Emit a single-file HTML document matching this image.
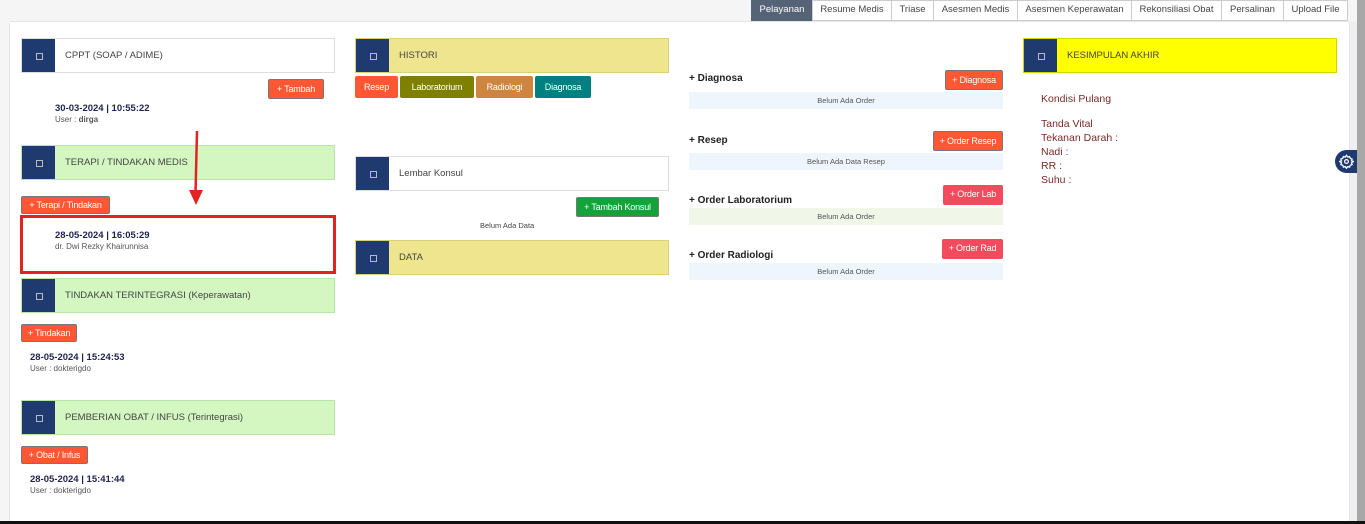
<!DOCTYPE html><html><head><style>
*{box-sizing:border-box;margin:0;padding:0}
body{width:1365px;height:524px;overflow:hidden;background:#f5f5f5;font-family:"Liberation Sans",sans-serif;position:relative;font-size:10px;color:#333}
.a{position:absolute}
.tab{position:absolute;top:0;height:21px;border:1px solid #ccc;background:#fff;color:#444;font-size:9.5px;text-align:center;line-height:18px}
.card{left:9px;top:21px;width:1341px;height:501px;background:#fff;border:1px solid #e4e4ea;border-radius:3px}
.hd{position:absolute;height:35px;border:1px solid #ddd;font-size:9.5px;color:#444;line-height:33px;padding-left:43px}
.hd i{position:absolute;left:0;top:0;width:33px;height:33px;background:#1f3a6e}
.hd i:after{content:"";position:absolute;left:14px;top:14px;width:5px;height:5px;border:1px solid #bbb}
.g{background:#d4f7c2;border-color:#b9e6a8}.y{background:#efe58e;border-color:#d8d07a}
.btn{position:absolute;height:20px;color:#fff;font-size:9px;letter-spacing:-0.2px;line-height:18px;padding:0;text-align:center;border-radius:2px;border:1px solid #777;background:#ff5733;white-space:nowrap}
.dt{position:absolute;font-size:9.5px;font-weight:bold;color:#1e2350}
.us{position:absolute;font-size:8px;color:#555}
.sec{position:absolute;left:689px;font-size:10px;font-weight:bold;color:#222}
.bar{position:absolute;left:689px;width:314px;height:17px;background:#eef5fd;font-size:7.5px;color:#555;text-align:center;line-height:17px}
.kp{position:absolute;left:1041px;font-size:10.5px;color:#7a2a2a}
</style></head><body>
<div class="tab" style="left:751px;width:62px;background:#546375;color:#fff;border-color:#546375">Pelayanan</div>
<div class="tab" style="left:812px;width:80px">Resume Medis</div>
<div class="tab" style="left:891px;width:43px">Triase</div>
<div class="tab" style="left:933px;width:85px">Asesmen Medis</div>
<div class="tab" style="left:1017px;width:115px">Asesmen Keperawatan</div>
<div class="tab" style="left:1131px;width:91px">Rekonsiliasi Obat</div>
<div class="tab" style="left:1221px;width:63px">Persalinan</div>
<div class="tab" style="left:1283px;width:65px">Upload File</div>
<div class="a card"></div>
<div class="a" style="left:1350px;top:21px;width:7px;height:501px;background:#efeff1"></div>
<div class="a" style="left:1357px;top:0;width:8px;height:524px;background:#a8a8a8"></div>
<div class="a" style="left:0;top:521px;width:1365px;height:3px;background:#111"></div>

<div class="hd" style="left:21px;top:38px;width:314px;background:#fff">CPPT (SOAP / ADIME)<i></i></div>
<div class="btn" style="left:268px;top:79px;width:56px">+ Tambah</div>
<div class="dt" style="left:55px;top:103px">30-03-2024 | 10:55:22</div>
<div class="us" style="left:55px;top:115px">User : <b>dirga</b></div>

<div class="hd g" style="left:21px;top:145px;width:314px">TERAPI / TINDAKAN MEDIS<i></i></div>
<div class="btn" style="left:21px;top:196px;width:89px;height:18px;line-height:16px">+ Terapi / Tindakan</div>
<div class="a" style="left:20px;top:215px;width:316px;height:59px;border:3px solid #e32222"></div>
<div class="dt" style="left:55px;top:230px">28-05-2024 | 16:05:29</div>
<div class="us" style="left:55px;top:242px">dr. Dwi Rezky Khairunnisa</div>
<svg class="a" style="left:188px;top:130px" width="16" height="76"><line x1="9" y1="1" x2="7.5" y2="64" stroke="#e32222" stroke-width="2.5"/><polygon points="1,60 15,60 8,75" fill="#e32222"/></svg>

<div class="hd g" style="left:21px;top:278px;width:314px">TINDAKAN TERINTEGRASI (Keperawatan)<i></i></div>
<div class="btn" style="left:21px;top:324px;width:56px;height:18px;line-height:16px">+ Tindakan</div>
<div class="dt" style="left:30px;top:352px">28-05-2024 | 15:24:53</div>
<div class="us" style="left:30px;top:364px">User : dokterigdo</div>

<div class="hd g" style="left:21px;top:400px;width:314px">PEMBERIAN OBAT / INFUS (Terintegrasi)<i></i></div>
<div class="btn" style="left:21px;top:446px;width:67px;height:18px;line-height:16px">+ Obat / Infus</div>
<div class="dt" style="left:30px;top:474px">28-05-2024 | 15:41:44</div>
<div class="us" style="left:30px;top:486px">User : dokterigdo</div>

<div class="hd y" style="left:355px;top:38px;width:314px">HISTORI<i></i></div>
<div class="btn" style="left:355px;top:76px;height:22px;line-height:22px;border:none;background:#ff5733;width:43px">Resep</div>
<div class="btn" style="left:400px;top:76px;height:22px;line-height:22px;border:none;background:#808000;width:74px">Laboratorium</div>
<div class="btn" style="left:476px;top:76px;height:22px;line-height:22px;border:none;background:#cd853f;width:57px">Radiologi</div>
<div class="btn" style="left:535px;top:76px;height:22px;line-height:22px;border:none;background:#008080;width:56px">Diagnosa</div>
<div class="hd" style="left:355px;top:156px;width:314px;background:#fff">Lembar Konsul<i></i></div>
<div class="btn" style="left:576px;top:197px;width:83px;background:#14a33a">+ Tambah Konsul</div>
<div class="a" style="left:480px;top:221px;font-size:7.5px;color:#444">Belum Ada Data</div>
<div class="hd y" style="left:355px;top:240px;width:314px">DATA<i></i></div>

<div class="sec" style="top:73px">+ Diagnosa</div>
<div class="btn" style="left:945px;width:58px;top:70px">+ Diagnosa</div>
<div class="bar" style="top:92px">Belum Ada Order</div>
<div class="sec" style="top:135px">+ Resep</div>
<div class="btn" style="left:933px;width:70px;top:131px">+ Order Resep</div>
<div class="bar" style="top:153px">Belum Ada Data Resep</div>
<div class="sec" style="top:195px">+ Order Laboratorium</div>
<div class="btn" style="left:943px;width:60px;top:185px;border:none;background:#f24b5e">+ Order Lab</div>
<div class="bar" style="top:208px;background:#f0f6e8">Belum Ada Order</div>
<div class="sec" style="top:250px">+ Order Radiologi</div>
<div class="btn" style="left:942px;width:61px;top:239px;border:none;background:#f24b5e">+ Order Rad</div>
<div class="bar" style="top:263px">Belum Ada Order</div>

<div class="hd" style="left:1023px;top:38px;width:314px;background:#ff0;border-color:#d8d800">KESIMPULAN AKHIR<i></i></div>
<div class="kp" style="top:93px">Kondisi Pulang</div>
<div class="kp" style="top:118px">Tanda Vital</div>
<div class="kp" style="top:132px">Tekanan Darah :</div>
<div class="kp" style="top:146px">Nadi :</div>
<div class="kp" style="top:160px">RR :</div>
<div class="kp" style="top:174px">Suhu :</div>

<div class="a" style="left:1335px;top:150px;width:22px;height:23px;background:#1f3a6e;border-radius:12px 0 0 12px"></div>
<svg class="a" style="left:1339px;top:154px" width="15" height="15" viewBox="0 0 24 24" fill="none" stroke="#fff" stroke-width="2"><circle cx="12" cy="12" r="3"/><path d="M12 2l2 3 3-1 1 3 3 1-1 3 3 1-3 2 1 3-3 1-1 3-3-1-2 3-2-3-3 1-1-3-3-1 1-3-3-2 3-1-1-3 3-1 1-3 3 1z"/></svg>
</body></html>
